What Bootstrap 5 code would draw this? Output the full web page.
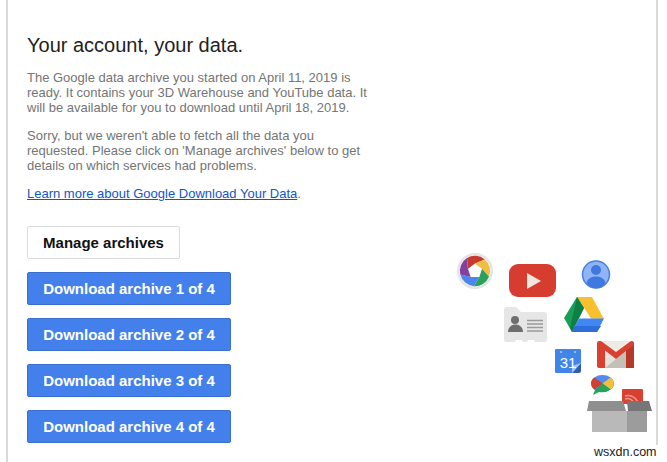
<!DOCTYPE html>
<html lang="en"><head><meta charset="utf-8">
<link href="https://cdn.jsdelivr.net/npm/bootstrap@5.3.0/dist/css/bootstrap.min.css" rel="stylesheet">
<style>
html,body{height:462px;overflow:hidden;background:#fff}
body{font-family:"Liberation Sans",Arial,sans-serif}
.mail-frame{position:relative;width:652px;height:462px;margin-left:6px;border-left:2px solid #d9d9d9;border-right:2px solid #d9d9d9;padding:32px 0 0 19px}
.mail-copy{width:340px}
.mail-title{font-size:20px;line-height:26px;font-weight:400;color:#222;margin:0 0 12px}
.mail-text{font-size:13px;line-height:15px;color:#757575;margin:0 0 13px}
.mail-text a{color:#15c;text-decoration:underline}
.mail-actions{margin-top:25px;gap:13px}
.mail-btn{display:block;height:33px;padding:0 15px;font-size:15px;font-weight:700;line-height:31px;border-radius:2px;white-space:nowrap}
.mail-btn-light{width:153px;color:#111;background:#fff;border:1px solid #dcdcdc}
.mail-btn-blue{width:204px;color:#fff;background:#4480eb;border:1px solid #3a6fd0}
.mail-art{position:absolute;left:-8px;top:0}
.mail-mark{position:absolute;left:585px;top:445px;width:73px;height:17px;font-size:12.500px;line-height:14px;color:#222;background:#fff;padding-left:1px}
</style></head><body>
<div class="mail-frame">
<div class="mail-copy">
<h1 class="mail-title">Your account, your data.</h1>
<p class="mail-text">The Google data archive you started on April 11, 2019 is ready. It contains your 3D Warehouse and YouTube data. It will be available for you to download until April 18, 2019.</p>
<p class="mail-text">Sorry, but we weren't able to fetch all the data you requested. Please click on 'Manage archives' below to get details on which services had problems.</p>
<p class="mail-text"><a href="#">Learn more about Google Download Your Data</a>.</p>
</div>
<div class="d-flex flex-column align-items-start mail-actions">
<a class="mail-btn mail-btn-light text-center text-decoration-none" href="#">Manage archives</a>
<a class="mail-btn mail-btn-blue text-center text-decoration-none" href="#">Download archive 1 of 4</a>
<a class="mail-btn mail-btn-blue text-center text-decoration-none" href="#">Download archive 2 of 4</a>
<a class="mail-btn mail-btn-blue text-center text-decoration-none" href="#">Download archive 3 of 4</a>
<a class="mail-btn mail-btn-blue text-center text-decoration-none" href="#">Download archive 4 of 4</a>
</div>
<svg class="mail-art" width="667" height="462" viewBox="0 0 667 462" aria-hidden="true">
<defs><path id="blade" d="M-7-2.300L-8-12.900A15.200 15.200 0 0 1 9.800-11.600L0-7.400Z"/></defs>
<circle cx="475" cy="271" r="18" fill="#e4e4e4"/>
<circle cx="475" cy="271" r="15.500" fill="#fff"/>
<g transform="translate(475 271)">
<use href="#blade" fill="#c8392e"/>
<use href="#blade" fill="#f2be42" transform="rotate(72)"/>
<use href="#blade" fill="#2ba05b" transform="rotate(144)"/>
<use href="#blade" fill="#4a86ee" transform="rotate(216)"/>
<use href="#blade" fill="#84409f" transform="rotate(288)"/>
</g>
<rect x="509" y="264" width="47" height="33" rx="9" fill="#d63c30"/>
<path d="M527 273l14 8-14 8z" fill="#eee7dd"/>
<circle cx="596" cy="274.500" r="13.500" fill="#8fb4f7" stroke="#4a7fe0" stroke-width="1.500"/>
<circle cx="596" cy="270" r="5" fill="#3f78e0"/>
<path d="M586.500 284c0-10 19-10 19 0a13 13 0 0 1-19 0z" fill="#3f78e0"/>
<path d="M577 297h15l12 22-13-.5z" fill="#f7c02f"/>
<path d="M577 297l-13 21 8 14 12-24z" fill="#169f57"/>
<path d="M577 297l7 11-12 24-2-4z" fill="#0f7f45"/>
<path d="M579 318.500h25l-7 13.500h-25z" fill="#4285f4"/>
<path d="M572 332l3-6h26l-4 6z" fill="#2f6ed8"/>
<path d="M504 310a3 3 0 0 1 3-3h9l5 5h23a3 3 0 0 1 3 3v25a2 2 0 0 1-2 2h-10l-1-2h-6l-1 2h-4l-1-2h-6l-1 2h-9a2 2 0 0 1-2-2z" fill="#e6e6e6"/>
<circle cx="515" cy="320" r="4" fill="#6e6e6e"/>
<path d="M508 332c0-10 15-10 15 0z" fill="#6e6e6e"/>
<path d="M527 320.500h16M527 324h16M527 327.500h16M527 331h16" stroke="#9a9a9a" stroke-width="1.500"/>
<path d="M556 349h24a1 1 0 0 1 1 1v13l-9 10h-16a1 1 0 0 1-1-1v-22a1 1 0 0 1 1-1z" fill="#4285e8"/>
<path d="M581 363l-9 10h7q2 0 2-2z" fill="#2d5cb0"/>
<path d="M572 373v-7l9-3z" fill="#a8c4f2"/>
<circle cx="561" cy="352" r=".8" fill="#fff"/><circle cx="575" cy="352" r=".8" fill="#fff"/>
<text x="568" y="368" text-anchor="middle" fill="#fff" font-family="Liberation Sans" font-size="15">31</text>
<path d="M601 341h30l-15 12z" fill="#eeebe4"/>
<path d="M605 350l11 9 10-8v17h-21z" fill="#e6e3dc"/>
<path d="M605 368l11-9 10-8v17z" fill="#c3c0b8"/>
<path d="M597 343q0-2 2-2h2l15 11 15-11h1q2 0 2 2v25h-8v-17l-10 8-11-8.500v17.500h-6q-2 0-2-2z" fill="#d8412f"/>
<path d="M626 351l8-6v23h-8z" fill="#b5382b"/>
<path d="M622 390a1 1 0 0 1 1-1h19a1 1 0 0 1 1 1v14h-21z" fill="#d8412f"/>
<path d="M625 396a11 11 0 0 1 13 6M625 399a7 7 0 0 1 9 4" fill="none" stroke="#ee9a92" stroke-width="1.500"/>
<ellipse cx="602.500" cy="383.500" rx="11.500" ry="8.500" fill="#4f8bf0"/>
<path d="M602.500 383.500L594.500 377.500A11.500 8.500 0 0 0 594.500 389.500Z" fill="#d0402f"/>
<path d="M602.500 383.500L610.500 377.500A11.500 8.500 0 0 1 610.500 389.500Z" fill="#f2c037"/>
<path d="M602.500 383.500L610.500 389.500A11.500 8.500 0 0 1 599 392L593 395L595 390Z" fill="#27a35a"/>
<rect x="592" y="411" width="35" height="21" fill="#b9b9b9"/>
<rect x="627" y="411" width="20" height="21" fill="#9c9c9c"/>
<path d="M589 401h34l3 10h-39z" fill="#8f8f8f"/>
<path d="M627 401h22l3 10h-24z" fill="#767676"/>
</svg>
<div class="mail-mark">wsxdn.com</div>
</div>
</body></html>
